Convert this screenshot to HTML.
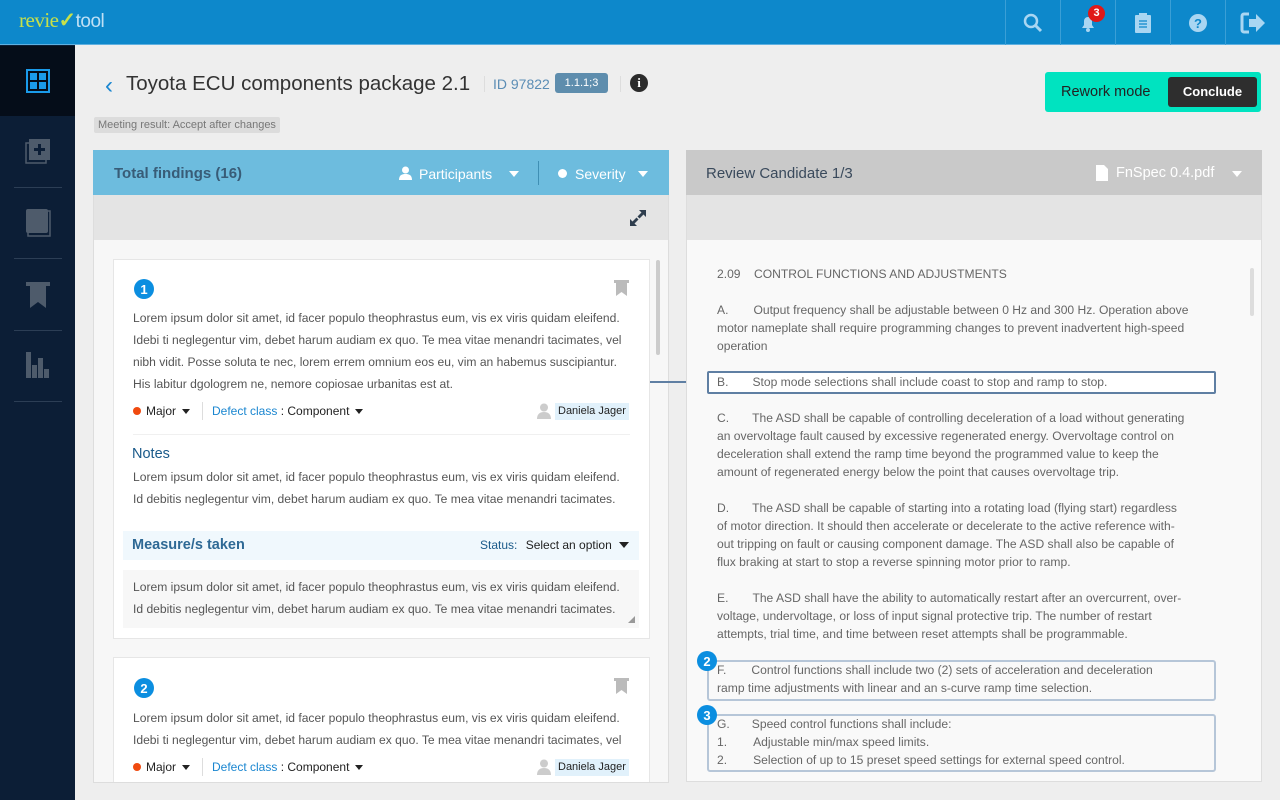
<!DOCTYPE html>
<html><head><meta charset="utf-8"><style>
*{margin:0;padding:0;box-sizing:border-box}
body{width:1280px;height:800px;overflow:hidden;background:#eeeeee;font-family:"Liberation Sans",sans-serif;position:relative;color:#333}
.a{position:absolute}
.top{left:0;top:0;width:1280px;height:45px;background:#0d88cb;border-bottom:1px solid #5fb0e0}
.ti{top:0;width:55px;height:45px;border-left:1px solid #3a9fd6;display:flex;align-items:center;justify-content:center}
.side{left:0;top:45px;width:75px;height:755px;background:#0c1e36}
.sep{left:14px;width:48px;height:1px;background:#2c3e55}
.p{font-size:12.1px;line-height:22px;color:#555;white-space:nowrap}
.r{font-size:12.1px;line-height:18px;color:#666;white-space:nowrap}
.num{width:20px;height:20px;border-radius:50%;background:#0b8ee0;color:#fff;font-weight:bold;font-size:13px;display:flex;align-items:center;justify-content:center}
.tri{display:inline-block;width:0;height:0;border-left:4px solid transparent;border-right:4px solid transparent;border-top:5px solid #222;vertical-align:middle;margin-left:6px}
.box{border:2px solid #b6c6d8;border-radius:3px}
</style></head><body>
<div class="a top"></div>
<div class="a" style="left:19px;top:8px;font-size:21px;font-family:'Liberation Serif',serif;color:#c6e04a;letter-spacing:-0.5px">revie<span style="color:#c6e04a;font-weight:bold">✓</span><span style="color:#bfe0f5;font-family:'Liberation Sans',sans-serif;font-size:19px">tool</span></div>
<div class="a ti" style="left:1005px"><svg width="20" height="20" viewBox="0 0 20 20"><circle cx="8" cy="8" r="6" fill="none" stroke="#a9d6f2" stroke-width="2.5"/><path d="M12 12l6 6" stroke="#a9d6f2" stroke-width="3"/></svg></div>
<div class="a ti" style="left:1060px"><svg width="20" height="20" viewBox="0 0 20 20"><path d="M4 15h12l-2-3V8a4 4 0 0 0-8 0v4z" fill="#a9d6f2"/><circle cx="10" cy="17" r="2" fill="#a9d6f2"/></svg></div>
<div class="a" style="left:1088px;top:5px;width:17px;height:17px;border-radius:50%;background:#e01818;color:#fff;font-size:11px;font-weight:bold;text-align:center;line-height:17px">3</div>
<div class="a ti" style="left:1115px"><svg width="18" height="22" viewBox="0 0 18 22"><rect x="1" y="3" width="16" height="18" rx="1" fill="#a9d6f2"/><rect x="5" y="1" width="8" height="4" fill="#a9d6f2"/><path d="M5 9h8M5 12h8M5 15h8" stroke="#0d88cb" stroke-width="1.3"/></svg></div>
<div class="a ti" style="left:1170px"><svg width="20" height="20"><circle cx="10" cy="10" r="9" fill="#a9d6f2"/><text x="10" y="15" font-size="13" font-weight="bold" fill="#0d88cb" text-anchor="middle" font-family="Liberation Sans">?</text></svg></div>
<div class="a ti" style="left:1225px"><svg width="26" height="22" viewBox="0 0 26 22"><path d="M9 2H4a2 2 0 0 0-2 2v14a2 2 0 0 0 2 2h5" fill="none" stroke="#a9d6f2" stroke-width="3"/><path d="M9 7h7V2l9 9-9 9v-5H9z" fill="#a9d6f2"/></svg></div>

<div class="a side"></div>
<div class="a" style="left:0;top:46px;width:75px;height:70px;background:#050d19"></div>
<div class="a" style="left:26px;top:69px;width:24px;height:24px;border:2px solid #1a9bea;padding:2px;display:grid;grid-template-columns:1fr 1fr;gap:2px"><i style="background:#1a9bea"></i><i style="background:#1a9bea"></i><i style="background:#1a9bea"></i><i style="background:#1a9bea"></i></div>
<svg class="a" style="left:25px;top:139px" width="26" height="26"><rect x="1" y="4" width="20" height="20" fill="none" stroke="#4e5b6b" stroke-width="1.5"/><rect x="4" y="0" width="21" height="21" fill="#4e5b6b"/><path d="M14.5 5v11M9 10.5h11" stroke="#0c1e36" stroke-width="3"/></svg>
<div class="a sep" style="top:187px"></div>
<svg class="a" style="left:25px;top:209px" width="26" height="28"><rect x="3" y="2" width="22" height="25" fill="none" stroke="#4e5b6b" stroke-width="1.5"/><rect x="1" y="0" width="22" height="24" rx="2" fill="#4e5b6b"/></svg>
<div class="a sep" style="top:258px"></div>
<svg class="a" style="left:25px;top:282px" width="26" height="26"><rect x="1" y="0" width="24" height="4" fill="#4e5b6b"/><path d="M5 4h16v22l-8-6-8 6z" fill="#4e5b6b"/></svg>
<div class="a sep" style="top:330px"></div>
<svg class="a" style="left:25px;top:352px" width="26" height="28"><rect x="1" y="0" width="5" height="26" fill="#4e5b6b"/><rect x="7" y="13" width="5" height="13" fill="#4e5b6b"/><rect x="13" y="6" width="5" height="20" fill="#4e5b6b"/><rect x="19" y="17" width="5" height="9" fill="#4e5b6b"/></svg>
<div class="a sep" style="top:401px"></div>

<div class="a" style="left:105px;top:72px;font-size:24px;color:#1a86d0">‹</div>
<div class="a" style="left:126px;top:72px;font-size:20.5px;color:#333">Toyota ECU components package 2.1</div>
<div class="a" style="left:484px;top:76px;width:1px;height:16px;background:#ddd"></div>
<div class="a" style="left:493px;top:76px;font-size:14px;color:#5b8db5">ID 97822</div>
<div class="a" style="left:555px;top:73px;width:53px;height:20px;background:#5e8dad;border-radius:3px;color:#fff;font-size:11px;text-align:center;line-height:20px">1.1.1;3</div>
<div class="a" style="left:620px;top:76px;width:1px;height:16px;background:#ddd"></div>
<div class="a" style="left:630px;top:74px;width:18px;height:18px;border-radius:50%;background:#2b2b2b;color:#fff;font-weight:bold;font-size:13px;text-align:center;line-height:18px;font-family:'Liberation Serif',serif">i</div>
<div class="a" style="left:94px;top:117px;height:16px;padding:0 4px;background:#dcdcdc;border-radius:2px;font-size:11px;color:#777;line-height:16px">Meeting result: Accept after changes</div>

<div class="a" style="left:1045px;top:72px;width:216px;height:40px;background:#00e3c0;border-radius:3px"></div>
<div class="a" style="left:1061px;top:84px;font-size:14.5px;color:#222">Rework mode</div>
<div class="a" style="left:1168px;top:77px;width:89px;height:30px;background:#2e2e2e;border-radius:3px;color:#fff;font-weight:bold;font-size:13px;text-align:center;line-height:30px">Conclude</div>

<!-- left panel -->
<div class="a" style="left:93px;top:150px;width:576px;height:633px;background:#f7f7f7;border:1px solid #ddd"></div>
<div class="a" style="left:93px;top:150px;width:576px;height:45px;background:#6dbcde"></div>
<div class="a" style="left:114px;top:165px;font-size:15px;color:#2f4c66;font-weight:bold;opacity:.85">Total findings (16)</div>
<svg class="a" style="left:399px;top:166px" width="13" height="14"><circle cx="6.5" cy="4" r="3.5" fill="#fff"/><path d="M0 14c0-5 3-6 6.5-6s6.5 1 6.5 6z" fill="#fff"/></svg>
<div class="a" style="left:419px;top:166px;font-size:14px;color:#fff">Participants</div>
<div class="a" style="left:509px;top:171px;border-left:5px solid transparent;border-right:5px solid transparent;border-top:6px solid #fff"></div>
<div class="a" style="left:538px;top:161px;width:1px;height:24px;background:#3f8fb4"></div>
<div class="a" style="left:558px;top:169px;width:9px;height:9px;border-radius:50%;background:#fff"></div>
<div class="a" style="left:575px;top:166px;font-size:14px;color:#fff">Severity</div>
<div class="a" style="left:638px;top:171px;border-left:5px solid transparent;border-right:5px solid transparent;border-top:6px solid #fff"></div>
<div class="a" style="left:94px;top:195px;width:574px;height:45px;background:#e4e4e4"></div>
<svg class="a" style="left:628px;top:208px" width="20" height="20"><path d="M11 2h7v7l-2.5-2.5-4 4-2-2 4-4zM9 18H2v-7l2.5 2.5 4-4 2 2-4 4z" fill="#2f3e4e"/></svg>
<div class="a" style="left:656px;top:260px;width:4px;height:95px;background:#ccc;border-radius:2px"></div>

<div class="a" style="left:113px;top:259px;width:537px;height:380px;background:#fff;border:1px solid #e6e6e6"></div>
<div class="a num" style="left:134px;top:279px">1</div>
<svg class="a" style="left:614px;top:280px" width="15" height="16"><rect x="0" y="0" width="15" height="3" fill="#bbb"/><path d="M2 3h11v13l-5.5-4-5.5 4z" fill="#bbb"/></svg>
<div class="a p" style="left:133px;top:307px">Lorem ipsum dolor sit amet, id facer populo theophrastus eum, vis ex viris quidam eleifend.<br>Idebi ti neglegentur vim, debet harum audiam ex quo. Te mea vitae menandri tacimates, vel<br>nibh vidit. Posse soluta te nec, lorem errem omnium eos eu, vim an habemus suscipiantur.<br>His labitur dgologrem ne, nemore copiosae urbanitas est at.</div>
<div class="a" style="left:133px;top:404px;font-size:12px;color:#222;white-space:nowrap"><span style="display:inline-block;width:8px;height:8px;border-radius:50%;background:#f04a0f;margin-right:5px"></span>Major<span class="tri"></span></div>
<div class="a" style="left:202px;top:402px;width:1px;height:18px;background:#ddd"></div>
<div class="a" style="left:212px;top:404px;font-size:12px;color:#222;white-space:nowrap"><span style="color:#1a86d0">Defect class</span> : Component<span class="tri"></span></div>
<svg class="a" style="left:537px;top:403px" width="14" height="16"><circle cx="7" cy="4.5" r="4" fill="#ccc"/><path d="M0 16c0-5 3-7 7-7s7 2 7 7z" fill="#ccc"/></svg>
<div class="a" style="left:555px;top:403px;height:17px;padding:0 3px;background:#e1f1fb;font-size:11px;line-height:17px;color:#222">Daniela Jager</div>
<div class="a" style="left:133px;top:434px;width:497px;height:1px;background:#f0f0f0"></div>
<div class="a" style="left:132px;top:446px;font-size:14.5px;color:#1a5a8a">Notes</div>
<div class="a p" style="left:133px;top:466px">Lorem ipsum dolor sit amet, id facer populo theophrastus eum, vis ex viris quidam eleifend.<br>Id debitis neglegentur vim, debet harum audiam ex quo. Te mea vitae menandri tacimates.</div>
<div class="a" style="left:123px;top:531px;width:516px;height:29px;background:#f0f8fd"></div>
<div class="a" style="left:132px;top:537px;font-size:14.5px;color:#1a5a8a;font-weight:bold;opacity:.9">Measure/s taken</div>
<div class="a" style="left:480px;top:538px;font-size:12px;color:#1a5a8a;white-space:nowrap">Status: <span style="color:#222;margin-left:5px">Select an option</span></div>
<div class="a" style="left:619px;top:542px;border-left:5px solid transparent;border-right:5px solid transparent;border-top:6px solid #222"></div>
<div class="a" style="left:123px;top:570px;width:516px;height:58px;background:#f7f7f7"></div>
<div class="a p" style="left:133px;top:576px">Lorem ipsum dolor sit amet, id facer populo theophrastus eum, vis ex viris quidam eleifend.<br>Id debitis neglegentur vim, debet harum audiam ex quo. Te mea vitae menandri tacimates.</div>
<div class="a" style="left:628px;top:616px;border-left:7px solid transparent;border-bottom:7px solid #999"></div>

<div class="a" style="left:113px;top:657px;width:537px;height:125px;background:#fff;border:1px solid #e6e6e6;border-bottom:none"></div>
<div class="a num" style="left:134px;top:678px">2</div>
<svg class="a" style="left:614px;top:678px" width="15" height="16"><rect x="0" y="0" width="15" height="3" fill="#bbb"/><path d="M2 3h11v13l-5.5-4-5.5 4z" fill="#bbb"/></svg>
<div class="a p" style="left:133px;top:707px">Lorem ipsum dolor sit amet, id facer populo theophrastus eum, vis ex viris quidam eleifend.<br>Idebi ti neglegentur vim, debet harum audiam ex quo. Te mea vitae menandri tacimates, vel</div>
<div class="a" style="left:133px;top:760px;font-size:12px;color:#222;white-space:nowrap"><span style="display:inline-block;width:8px;height:8px;border-radius:50%;background:#f04a0f;margin-right:5px"></span>Major<span class="tri"></span></div>
<div class="a" style="left:202px;top:758px;width:1px;height:18px;background:#ddd"></div>
<div class="a" style="left:212px;top:760px;font-size:12px;color:#222;white-space:nowrap"><span style="color:#1a86d0">Defect class</span> : Component<span class="tri"></span></div>
<svg class="a" style="left:537px;top:759px" width="14" height="16"><circle cx="7" cy="4.5" r="4" fill="#ccc"/><path d="M0 16c0-5 3-7 7-7s7 2 7 7z" fill="#ccc"/></svg>
<div class="a" style="left:555px;top:759px;height:17px;padding:0 3px;background:#e1f1fb;font-size:11px;line-height:17px;color:#222">Daniela Jager</div>

<div class="a" style="left:650px;top:381px;width:58px;height:2px;background:#5f7fa3"></div>

<!-- right panel -->
<div class="a" style="left:686px;top:150px;width:576px;height:632px;background:#f9f9f9;border:1px solid #ddd"></div>
<div class="a" style="left:686px;top:150px;width:576px;height:45px;background:#c9c9c9"></div>
<div class="a" style="left:706px;top:165px;font-size:15px;color:#3a4a5c">Review Candidate 1/3</div>
<svg class="a" style="left:1096px;top:165px" width="12" height="16"><path d="M0 0h8l4 4v12H0z" fill="#fff"/></svg>
<div class="a" style="left:1116px;top:165px;font-size:14.5px;color:#fff">FnSpec 0.4.pdf</div>
<div class="a" style="left:1232px;top:171px;border-left:5px solid transparent;border-right:5px solid transparent;border-top:6px solid #fff"></div>
<div class="a" style="left:687px;top:195px;width:574px;height:45px;background:#e4e4e4"></div>
<div class="a" style="left:1250px;top:268px;width:4px;height:48px;background:#ddd;border-radius:2px"></div>

<div class="a r" style="left:717px;top:265px">2.09&nbsp;&nbsp;&nbsp;&nbsp;CONTROL FUNCTIONS AND ADJUSTMENTS</div>
<div class="a r" style="left:717px;top:301px">A.<span style="display:inline-block;width:25px"></span>Output frequency shall be adjustable between 0 Hz and 300 Hz. Operation above<br>motor nameplate shall require programming changes to prevent inadvertent high-speed<br>operation</div>
<div class="a" style="left:707px;top:371px;width:509px;height:23px;border:2px solid #5f7fa3;border-radius:2px;background:#fff"></div>
<div class="a r" style="left:717px;top:373px">B.<span style="display:inline-block;width:24px"></span>Stop mode selections shall include coast to stop and ramp to stop.</div>
<div class="a r" style="left:717px;top:409px">C.<span style="display:inline-block;width:23px"></span>The ASD shall be capable of controlling deceleration of a load without generating<br>an overvoltage fault caused by excessive regenerated energy. Overvoltage control on<br>deceleration shall extend the ramp time beyond the programmed value to keep the<br>amount of regenerated energy below the point that causes overvoltage trip.</div>
<div class="a r" style="left:717px;top:499px">D.<span style="display:inline-block;width:23px"></span>The ASD shall be capable of starting into a rotating load (flying start) regardless<br>of motor direction. It should then accelerate or decelerate to the active reference with-<br>out tripping on fault or causing component damage. The ASD shall also be capable of<br>flux braking at start to stop a reverse spinning motor prior to ramp.</div>
<div class="a r" style="left:717px;top:589px">E.<span style="display:inline-block;width:24px"></span>The ASD shall have the ability to automatically restart after an overcurrent, over-<br>voltage, undervoltage, or loss of input signal protective trip. The number of restart<br>attempts, trial time, and time between reset attempts shall be programmable.</div>
<div class="a box" style="left:707px;top:660px;width:509px;height:41px"></div>
<div class="a num" style="left:697px;top:651px">2</div>
<div class="a r" style="left:717px;top:661px">F.<span style="display:inline-block;width:25px"></span>Control functions shall include two (2) sets of acceleration and deceleration<br>ramp time adjustments with linear and an s-curve ramp time selection.</div>
<div class="a box" style="left:707px;top:714px;width:509px;height:58px"></div>
<div class="a num" style="left:697px;top:705px">3</div>
<div class="a r" style="left:717px;top:715px">G.<span style="display:inline-block;width:22px"></span>Speed control functions shall include:<br>1.<span style="display:inline-block;width:26px"></span>Adjustable min/max speed limits.<br>2.<span style="display:inline-block;width:26px"></span>Selection of up to 15 preset speed settings for external speed control.</div>
</body></html>
